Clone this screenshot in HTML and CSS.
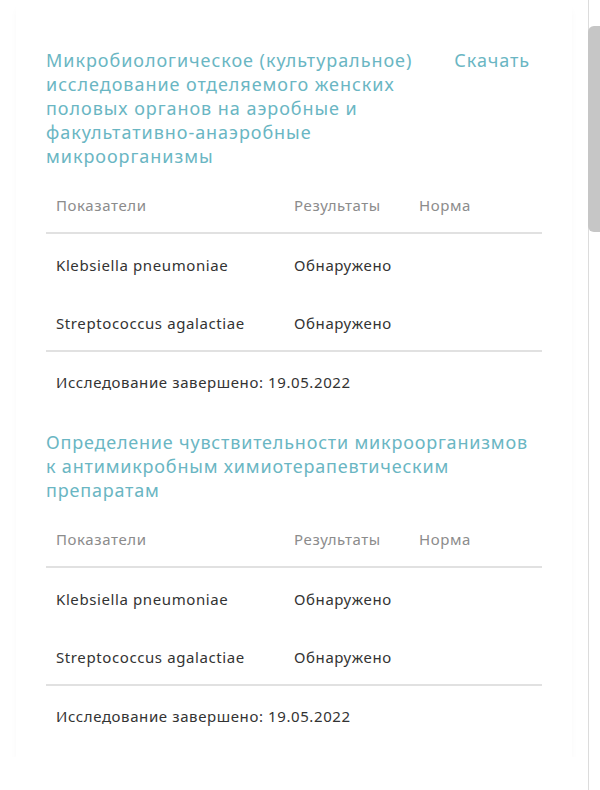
FILE: index.html
```html
<!DOCTYPE html>
<html lang="ru">
<head>
<meta charset="utf-8">
<link rel="stylesheet" href="styles.css">
</head>
<body>
<div class="page">
  <div class="card">
    <section class="study">
      <div class="study-head">
        <div class="study-title">Микробиологическое (культуральное) исследование отделяемого женских половых органов на аэробные и факультативно-анаэробные микроорганизмы</div>
        <div class="download">Скачать</div>
      </div>
      <div class="table">
        <div class="row head"><div class="c1">Показатели</div><div class="c2">Результаты</div><div class="c3">Норма</div></div>
        <div class="row"><div class="c1">Klebsiella pneumoniae</div><div class="c2">Обнаружено</div><div class="c3"></div></div>
        <div class="row last"><div class="c1">Streptococcus agalactiae</div><div class="c2">Обнаружено</div><div class="c3"></div></div>
      </div>
      <div class="done">Исследование завершено: 19.05.2022</div>
    </section>
    <section class="study">
      <div class="study-head">
        <div class="study-title wide">Определение чувствительности микроорганизмов к антимикробным химиотерапевтическим препаратам</div>
      </div>
      <div class="table">
        <div class="row head"><div class="c1">Показатели</div><div class="c2">Результаты</div><div class="c3">Норма</div></div>
        <div class="row"><div class="c1">Klebsiella pneumoniae</div><div class="c2">Обнаружено</div><div class="c3"></div></div>
        <div class="row last"><div class="c1">Streptococcus agalactiae</div><div class="c2">Обнаружено</div><div class="c3"></div></div>
      </div>
      <div class="done">Исследование завершено: 19.05.2022</div>
    </section>
  </div>
</div>
<div class="scroll-track"></div>
<div class="scroll-thumb"></div>
</body>
</html>
```
FILE: styles.css
```css
html, body {
  margin: 0;
  padding: 0;
  background: #ffffff;
}
body {
  font-family: "Noto Sans", "Open Sans", sans-serif;
  color: #333333;
  overflow: hidden;
}
.page {
  padding: 0 0 0 16px;
}
.card {
  width: 556px;
  box-sizing: border-box;
  padding: 48px 30px 31px 30px;
  background: #fff;
  box-shadow: 0 7px 9px -3px rgba(0,0,0,0.06);
}
.study + .study {
  margin-top: 38px;
}
.study-head {
  display: flex;
  justify-content: space-between;
}
.study-title {
  width: 395px;
  font-size: 18px;
  line-height: 24px;
  letter-spacing: 0.95px;
  color: #6ab6c3;
}
.study-title.wide {
  width: 492px;
  letter-spacing: 0.8px;
}
.download {
  font-size: 18px;
  line-height: 24px;
  letter-spacing: 0.9px;
  color: #6ab6c3;
  padding-right: 12px;
}
.table {
  margin-top: 18px;
}
.row {
  display: grid;
  grid-template-columns: 238px 125px 1fr;
  padding: 21px 10px 17px 10px;
  font-size: 15px;
  line-height: 20px;
  letter-spacing: 0.6px;
}
.row.head {
  padding: 9px 10px 17px 10px;
  color: #8c8c8c;
  border-bottom: 2px solid #e1e1e1;
}
.row.last {
  border-bottom: 2px solid #e1e1e1;
}
.done {
  padding: 20px 10px 0 10px;
  font-size: 15px;
  line-height: 20px;
  letter-spacing: 0.6px;
}
.scroll-track {
  position: fixed;
  top: 0;
  bottom: 0;
  left: 588px;
  width: 1px;
  background: #dcdcdc;
}
.scroll-thumb {
  position: fixed;
  top: 26px;
  left: 588px;
  width: 12px;
  height: 206px;
  border-radius: 6px 0 0 6px;
  background: #c6c6c6;
}
```
